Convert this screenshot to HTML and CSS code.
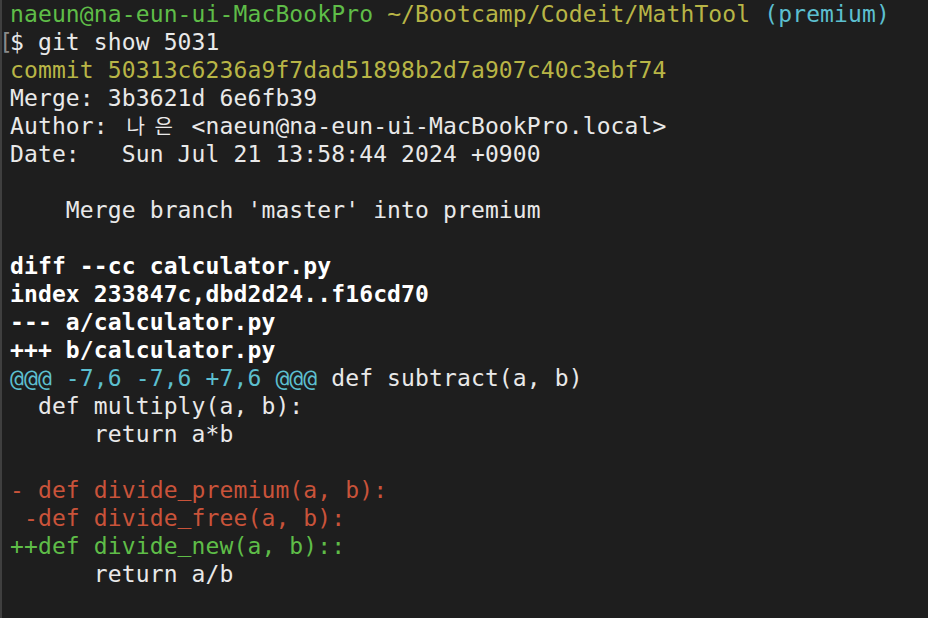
FILE: index.html
```html
<!DOCTYPE html>
<html lang="ko">
<head>
<meta charset="utf-8">
<title>Terminal</title>
<link rel="stylesheet" href="styles.css">
</head>
<body>
<div class="term">
  <div class="line"><span class="g">naeun@na-eun-ui-MacBookPro</span> <span class="y">~/Bootcamp/Codeit/MathTool</span> <span class="c">(premium)</span></div>
  <div class="line"><span class="bracket">[</span>$ git show 5031</div>
  <div class="line y">commit 50313c6236a9f7dad51898b2d7a907c40c3ebf74</div>
  <div class="line">Merge: 3b3621d 6e6fb39</div>
  <div class="line">Author: <span class="wide">나</span><span class="wide">은</span> &lt;naeun@na-eun-ui-MacBookPro.local&gt;</div>
  <div class="line">Date:   Sun Jul 21 13:58:44 2024 +0900</div>
  <div class="line"> </div>
  <div class="line">    Merge branch 'master' into premium</div>
  <div class="line"> </div>
  <div class="line b">diff --cc calculator.py</div>
  <div class="line b">index 233847c,dbd2d24..f16cd70</div>
  <div class="line b">--- a/calculator.py</div>
  <div class="line b">+++ b/calculator.py</div>
  <div class="line"><span class="c">@@@ -7,6 -7,6 +7,6 @@@</span> def subtract(a, b)</div>
  <div class="line">  def multiply(a, b):</div>
  <div class="line">      return a*b</div>
  <div class="line"> </div>
  <div class="line r">- def divide<span class="us">_</span>premium(a, b):</div>
  <div class="line r"> -def divide<span class="us">_</span>free(a, b):</div>
  <div class="line g">++def divide<span class="us">_</span>new(a, b)::</div>
  <div class="line">      return a/b</div>
</div>
</body>
</html>
```
FILE: styles.css
```css
html, body {
  margin: 0;
  padding: 0;
  background: #1e1e1e;
}
body {
  width: 928px;
  height: 618px;
  overflow: hidden;
}
.term {
  position: relative;
  box-sizing: border-box;
  height: 618px;
  border-left: 2px solid #3f3f3f;
  padding: 0 0 0 8px;
  font-family: "DejaVu Sans Mono", "Noto Sans CJK KR", monospace;
  font-size: 23px;
  letter-spacing: 0.12px;
  line-height: 28px;
  color: #e9e9e9;
}
.line {
  white-space: pre;
  height: 28px;
}
.g { color: #5fbd48; }
.y { color: #b8b546; }
.c { color: #5cbfcf; }
.r { color: #c9533a; }
.b { font-weight: bold; color: #ffffff; }
.bracket {
  position: absolute;
  left: -3px;
  color: #8a8a8a;
}
.us {
  position: relative;
  top: -3px;
}
.wide {
  display: inline-block;
  width: 27.94px;
  text-align: center;
  font-family: "Noto Sans CJK KR", sans-serif;
  font-size: 20px;
  letter-spacing: 0;
}
```
